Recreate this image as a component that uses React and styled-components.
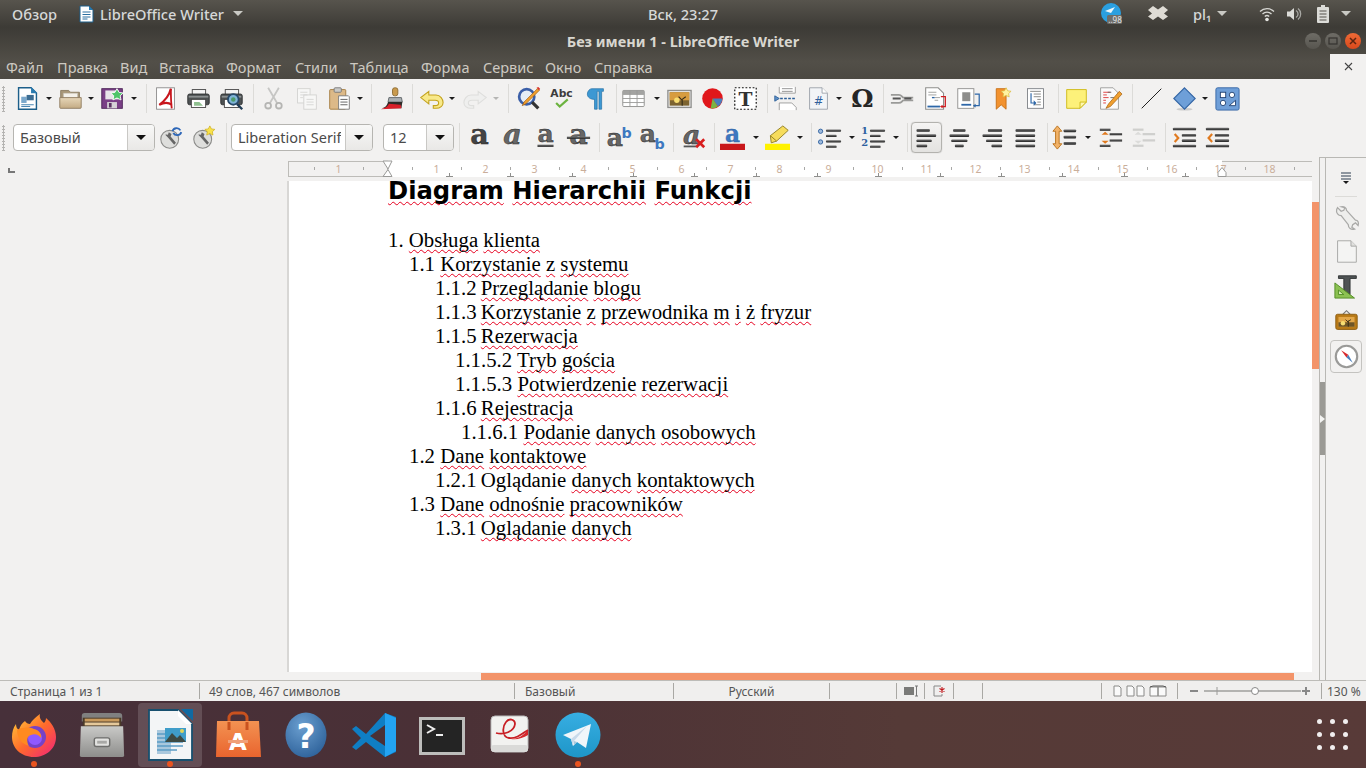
import React from "react";
import styled, { createGlobalStyle } from "styled-components";

const Global = createGlobalStyle`
  html, body { margin: 0; padding: 0; background: #3d3b36; }
  * { box-sizing: border-box; }
  svg { overflow: visible; flex: none; }
`;

const UI = `"Noto Sans", "Open Sans", sans-serif`;

const Screen = styled.div`
  width: 1366px;
  height: 768px;
  display: flex;
  flex-direction: column;
  overflow: hidden;
  font-family: ${UI};
`;

/* ---------- top of the window ---------- */
const Chrome = styled.div`
  background: linear-gradient(#57544d 0, #3d3b36 27px, #3e3c37 30px, #524f48 62px, #4b4842 79px);
  height: 79px;
  flex: none;
`;
const TopBar = styled.div`
  height: 27px;
  display: grid;
  grid-template-columns: 1fr auto 1fr;
  align-items: center;
  color: #d6d8d8;
  font-size: 14.6px;
  font-weight: 500;
`;
const TopLeft = styled.div`
  display: flex;
  align-items: center;
  padding-left: 12px;
`;
const AppName = styled.div`
  display: flex;
  align-items: center;
  gap: 6px;
  margin-left: 21px;
`;
const Tray = styled.div`
  display: flex;
  align-items: center;
  justify-content: flex-end;
  height: 27px;
  padding-right: 8px;
`;
const TraySlot = styled.div`
  width: ${(p) => p.$w}px;
  display: flex;
  align-items: center;
  justify-content: ${(p) => (p.$pad ? "flex-start" : "center")};
  padding-left: ${(p) => p.$pad || 0}px;
  gap: 6px;
`;
const Caret = styled.span`
  display: inline-block;
  width: 0;
  height: 0;
  margin-left: ${(p) => p.$gap || 0}px;
  border-left: 5px solid transparent;
  border-right: 5px solid transparent;
  border-top: 5px solid #c9c9c4;
`;
const TitleBar = styled.div`
  height: 27px;
  display: flex;
  align-items: center;
  justify-content: center;
  position: relative;
  color: #d9d7d0;
  font-size: 14.5px;
  font-weight: 700;
`;
const WinButtons = styled.div`
  position: absolute;
  right: 5px;
  top: 6px;
  display: flex;
  gap: 4px;
`;
const WinButton = styled.div`
  width: 16px;
  height: 16px;
  border-radius: 50%;
  display: flex;
  align-items: center;
  justify-content: center;
  background: ${(p) => (p.$close ? "linear-gradient(#ee6a36,#d8491c)" : "linear-gradient(#6e6c66,#57554f)")};
  color: ${(p) => (p.$close ? "#5b2410" : "#35332f")};
`;
const MenuBar = styled.div`
  height: 25px;
  display: flex;
  align-items: center;
  position: relative;
`;
const MenuItem = styled.div`
  color: #cdc9c1;
  font-size: 14.5px;
  width: ${(p) => p.$w}px;
  padding-left: 6px;
  white-space: nowrap;
`;
const CloseTab = styled.div`
  position: absolute;
  right: 0;
  top: 0;
  width: 36px;
  height: 25px;
  background: #f2f1f0;
  display: flex;
  align-items: center;
  justify-content: center;
`;

/* ---------- toolbars ---------- */
const Toolbar = styled.div`
  height: 39px;
  flex: none;
  background: #f2f1f0;
  display: flex;
  align-items: center;
`;
const Grip = styled.div`
  width: ${(p) => p.$w}px;
  height: 26px;
  flex: none;
  background-image: radial-gradient(#b4b3b1 1.1px, transparent 1.2px);
  background-size: 3px 3px;
  background-repeat: repeat-y;
  background-position: 2px 0;
`;
const Tool = styled.div`
  width: ${(p) => p.$w || 33}px;
  height: 31px;
  flex: none;
  display: flex;
  align-items: center;
  justify-content: center;
  border-radius: 4px;
  ${(p) =>
    p.$active &&
    `
    border: 1px solid #b3b2ae;
    background: linear-gradient(#f5f4f3, #e3e2e0);
    box-shadow: 0 0 1px #aaa;
  `}
`;
const Drop = styled.div`
  width: 9.5px;
  flex: none;
  display: flex;
  justify-content: center;
  &::after {
    content: "";
    border-left: 3.5px solid transparent;
    border-right: 3.5px solid transparent;
    border-top: 3.5px solid ${(p) => (p.$off ? "#b5b5b3" : "#1c1c1c")};
  }
`;
const Gap = styled.div`
  width: ${(p) => p.$w}px;
  flex: none;
`;
const Sep = styled.div`
  width: ${(p) => p.$w}px;
  height: 29px;
  flex: none;
  position: relative;
  &::after {
    content: "";
    position: absolute;
    left: ${(p) => p.$at}px;
    top: 0;
    bottom: 0;
    width: 1px;
    background: #dcdbd8;
  }
`;
const Combo = styled.div`
  width: ${(p) => p.$w}px;
  height: 27px;
  flex: none;
  display: flex;
  background: #fff;
  border: 1px solid #b6b5b1;
  border-radius: 4px;
  color: #4a4a4a;
  font-size: 14.5px;
  overflow: hidden;
`;
const ComboText = styled.div`
  flex: 1;
  min-width: 0;
  padding-left: 6px;
  margin-right: 4px;
  line-height: 25px;
  white-space: nowrap;
  overflow: hidden;
`;
const ComboArrow = styled.div`
  width: 27px;
  flex: none;
  border-left: 1px solid #c9c8c5;
  background: linear-gradient(#f8f8f7, #e9e8e6);
  display: flex;
  align-items: center;
  justify-content: center;
  &::after {
    content: "";
    border-left: 5px solid transparent;
    border-right: 5px solid transparent;
    border-top: 5px solid #111;
  }
`;

/* ---------- work area ---------- */
const Work = styled.div`
  flex: 1;
  min-height: 0;
  display: flex;
  background: #f2f1f0;
`;
const EditorCol = styled.div`
  width: 1319px;
  flex: none;
  display: flex;
  flex-direction: column;
`;
const RulerRow = styled.div`
  height: 24px;
  flex: none;
  display: flex;
  align-items: flex-start;
`;
const RulerCorner = styled.div`
  width: 288px;
  flex: none;
  padding: 11px 0 0 8px;
`;
const CornerMark = styled.div`
  width: 7px;
  height: 5px;
  border-left: 2px solid #777;
  border-bottom: 2px solid #777;
`;
const DocRow = styled.div`
  flex: 1;
  min-height: 0;
  display: flex;
`;
const Gutter = styled.div`
  width: 287px;
  flex: none;
`;
const Page = styled.div`
  width: 1025px;
  flex: none;
  background: #fff;
  border-left: 2px solid #d8d7d5;
  padding: 0 0 0 99px;
  color: #000;
  font-family: "Liberation Serif", serif;
  font-size: 20.8px;
  line-height: 24px;
`;
const VScroll = styled.div`
  flex: 1;
  padding-top: 21px;
`;
const VThumb = styled.div`
  height: 167px;
  background: #f3946a;
`;
const HScroll = styled.div`
  height: 8px;
  flex: none;
  padding: 1px 25px 0 481px;
`;
const HThumb = styled.div`
  height: 7px;
  background: #f3946a;
`;
const Heading = styled.div`
  font-family: "DejaVu Sans", sans-serif;
  font-weight: 700;
  font-size: 24.27px;
  line-height: 28px;
  margin: -4px 0 23px;
  white-space: nowrap;
`;
const Line = styled.div`
  padding-left: ${(p) => p.$indent}px;
  white-space: nowrap;
`;
const Num = styled.span`
  margin-right: ${(p) => (p.$tight ? -1 : 0)}px;
`;
const Wavy = styled.span`
  text-decoration: underline wavy #e6001e 1.2px;
  text-underline-offset: 2px;
  text-decoration-skip-ink: none;
`;

/* ---------- sidebar ---------- */
const Handle = styled.div`
  width: 7px;
  flex: none;
  border-left: 1px solid #b9b8b4;
  border-right: 1px solid #b9b8b4;
  border-top: 1px solid #b9b8b4;
  padding-top: 224px;
`;
const HandleGrip = styled.div`
  height: 73px;
  background: #9b9a95;
  display: flex;
  align-items: center;
  justify-content: center;
  &::after {
    content: "";
    border-top: 4px solid transparent;
    border-bottom: 4px solid transparent;
    border-left: 5px solid #f4f4f2;
  }
`;
const TabBar = styled.div`
  flex: 1;
  border-top: 1px solid #b9b8b4;
  display: flex;
  flex-direction: column;
  align-items: center;
  padding-top: 13px;
`;
const TabDivider = styled.div`
  width: 22px;
  height: 1px;
  background: #dcdbd8;
  margin: 11px 0 3px;
`;
const Tab = styled.div`
  width: 32px;
  height: ${(p) => (p.$active ? 33 : 34.5)}px;
  flex: none;
  margin-top: ${(p) => (p.$active ? 2 : 0)}px;
  display: flex;
  align-items: center;
  justify-content: center;
  border-radius: 4px;
  border: 1px solid ${(p) => (p.$active ? "#c4c3c0" : "transparent")};
`;

/* ---------- status bar ---------- */
const Status = styled.div`
  height: 21px;
  flex: none;
  display: flex;
  background: #f0efee;
  border-top: 1px solid #bdbcb8;
  color: #555;
  font-size: 12px;
  align-items: center;
`;
const Cell = styled.div`
  width: ${(p) => p.$w}px;
  height: 16px;
  flex: none;
  display: flex;
  align-items: center;
  justify-content: ${(p) => (p.$center ? "center" : "flex-start")};
  padding-left: ${(p) => (p.$center ? 0 : p.$pad ?? 9)}px;
  border-right: ${(p) => (p.$last ? "none" : "1px solid #a9a8a4")};
  white-space: nowrap;
`;

/* ---------- dock ---------- */
const Dock = styled.div`
  height: 67px;
  flex: none;
  display: flex;
  align-items: center;
  background: linear-gradient(90deg, #47303a 0, #4a3036 420px, #553a37 900px, #583a38 1366px);
  position: relative;
`;
const DockSlot = styled.div`
  width: 64px;
  height: 64px;
  flex: none;
  margin: 1px 2px 0;
  display: flex;
  align-items: center;
  justify-content: center;
  position: relative;
  border-radius: 4px;
  background: ${(p) => (p.$active ? "rgba(255,255,255,.15)" : "transparent")};
  ${(p) =>
    p.$running &&
    `
    &::after {
      content: "";
      position: absolute;
      left: 29px;
      bottom: 0;
      width: 6px;
      height: 6px;
      border-radius: 50%;
      background: #e95420;
    }
  `}
`;
const AppGrid = styled.div`
  position: absolute;
  right: 18px;
  top: 18px;
  display: grid;
  grid-template-columns: repeat(3, 5px);
  gap: 8px;
`;
const AppDot = styled.div`
  width: 5px;
  height: 5px;
  border-radius: 50%;
  background: #f1eeee;
`;

/* ---------- small drawing helpers ---------- */
const Icon = ({ size = 25, children, vb = "0 0 28 28" }) => (
  <svg width={size} height={size} viewBox={vb}>
    {children}
  </svg>
);

const Defs = () => (
  <svg width="0" height="0" style={{ position: "absolute" }}>
    <defs>
      <linearGradient id="bar" x1="0" y1="0" x2="0" y2="1">
        <stop offset="0" stopColor="#777" />
        <stop offset="1" stopColor="#222" />
      </linearGradient>
      <linearGradient id="tan" x1="0" y1="0" x2="0" y2="1">
        <stop offset="0" stopColor="#e6d6b8" />
        <stop offset="1" stopColor="#c4ab84" />
      </linearGradient>
      <linearGradient id="ffx" x1="0" y1="0" x2="1" y2="1">
        <stop offset="0" stopColor="#ffd23a" />
        <stop offset=".5" stopColor="#ff6b2b" />
        <stop offset="1" stopColor="#f0217c" />
      </linearGradient>
      <linearGradient id="store" x1="0" y1="0" x2="0" y2="1">
        <stop offset="0" stopColor="#f39252" />
        <stop offset="1" stopColor="#e9642e" />
      </linearGradient>
      <radialGradient id="help" cx=".4" cy=".3" r=".8">
        <stop offset="0" stopColor="#6b9fd0" />
        <stop offset="1" stopColor="#2a5e97" />
      </radialGradient>
      <linearGradient id="tg" x1="0" y1="0" x2="0" y2="1">
        <stop offset="0" stopColor="#37aee2" />
        <stop offset="1" stopColor="#1e96c8" />
      </linearGradient>
      <linearGradient id="cab" x1="0" y1="0" x2="0" y2="1">
        <stop offset="0" stopColor="#c9c9c7" />
        <stop offset="1" stopColor="#8d8d8b" />
      </linearGradient>
    </defs>
  </svg>
);

const Bars = ({ rows }) => (
  <Icon>
    {rows.map(([dx, w], i) => (
      <rect key={i} x={2.8 + dx} y={4.5 + i * 5.8} width={w} height="3" rx="1" fill="url(#bar)" />
    ))}
  </Icon>
);

const Glyph = ({ children, style = "normal", color = "#555", size = 32, x = 14, y = 21 }) => (
  <text x={x} y={y} textAnchor="middle" fontFamily="DejaVu Serif" fontWeight="700" fontStyle={style} fontSize={size} fill={color} stroke="#222" strokeWidth="0.5">
    {children}
  </text>
);

/* ---------- toolbar icons ---------- */
const NewDoc = () => (
  <Icon>
    <path d="M4 2h14l6 6v18H4z" fill="#fff" stroke="#1d5f8a" strokeWidth="1.6" />
    <path d="M18 1l7 7h-7z" fill="#2a7bb0" />
    <rect x="7" y="12" width="6" height="7" fill="#7aa8cc" />
    <rect x="13" y="10" width="8" height="6" fill="#3c6d92" />
    <path d="M7 21h14M7 23h10" stroke="#4a86b3" strokeWidth="1.2" />
  </Icon>
);
const OpenFolder = () => (
  <Icon>
    <path d="M3 5h9l2 2h10v6H3z" fill="#a89779" stroke="#8a7a5f" />
    <rect x="6" y="8" width="16" height="7" fill="#f4f1ea" stroke="#bdb7a8" strokeWidth=".6" />
    <path d="M2 13h24v11a1 1 0 0 1-1 1H3a1 1 0 0 1-1-1z" fill="url(#tan)" stroke="#8d7b5e" />
  </Icon>
);
const SaveDoc = () => (
  <Icon>
    <rect x="2" y="3" width="23" height="22" fill="#7a3f86" stroke="#4c2256" />
    <rect x="6" y="5" width="15" height="10" fill="#e9e4ea" />
    <rect x="8" y="18" width="11" height="7" fill="#d6d2d6" />
    <rect x="10" y="19" width="3" height="5" fill="#5a3362" />
    <path d="M19 3l2.400 4.200 4.600.6-3.400 3.200.9 4.600-4.500-2.200-4.500 2.200.9-4.600-3.400-3.200 4.600-.6z" fill="#4fc46a" stroke="#fff" strokeWidth="1" />
  </Icon>
);
const PdfIcon = () => (
  <Icon>
    <rect x="4" y="2" width="20" height="24" fill="#fff" stroke="#8a8a8a" />
    <path d="M20 3c-2 8-6 13-13 18 6-3 10-3 14 0" fill="none" stroke="#c8161d" strokeWidth="2.400" />
    <path d="M20 3c0 7 0 14 1 22" fill="none" stroke="#c8161d" strokeWidth="2" />
  </Icon>
);
const PrintIcon = ({ lens }) => (
  <Icon>
    <rect x="7" y="4" width="15" height="8" fill="#f4f4f4" stroke="#444" />
    <rect x="2" y="9" width="24" height="12" rx="2" fill="#4e5253" stroke="#2a2c2d" />
    <rect x="3" y="11" width="22" height="2" fill="#8b8f90" />
    <rect x="6" y="15" width="16" height="9" fill="#fff" stroke="#444" />
    {lens ? (
      <>
        <circle cx="16" cy="15" r="6" fill="#7fb4d8" stroke="#27496a" strokeWidth="2" />
        <circle cx="16" cy="15" r="2.500" fill="#4d9a6a" />
        <path d="M20 20l6 6" stroke="#1f3b55" strokeWidth="2.600" />
      </>
    ) : (
      <path d="M9 18h6l4 4H9z" fill="#8fc08f" />
    )}
  </Icon>
);
const CutIcon = () => (
  <Icon>
    <path d="M8 2l10 17M20 2L10 19" stroke="#c6c6c4" strokeWidth="2" fill="none" />
    <circle cx="8" cy="22" r="3.200" fill="none" stroke="#b5b5b3" strokeWidth="2" />
    <circle cx="20" cy="22" r="3.200" fill="none" stroke="#b5b5b3" strokeWidth="2" />
  </Icon>
);
const CopyIcon = () => (
  <Icon>
    <rect x="4" y="3" width="14" height="16" fill="#f7f7f6" stroke="#d2d2d0" />
    <rect x="11" y="10" width="14" height="16" fill="#f7f7f6" stroke="#d2d2d0" />
    <path d="M7 7h8M7 10h8M7 13h3M14 15h8M14 18h8M14 21h8" stroke="#d5d5d3" />
  </Icon>
);
const PasteIcon = () => (
  <Icon>
    <rect x="3" y="4" width="18" height="22" rx="1" fill="#dcb988" stroke="#a27a3e" />
    <rect x="8" y="2" width="8" height="5" rx="1" fill="#c9c9c7" stroke="#777" />
    <path d="M13 11h11l1 1v14H13z" fill="#fff" stroke="#777" />
    <path d="M15 15h8M15 18h8M15 21h8" stroke="#555" />
  </Icon>
);
const BrushIcon = () => (
  <Icon>
    <rect x="14" y="2" width="6" height="9" rx="2.500" fill="#c99a4d" stroke="#8b6a30" />
    <path d="M10 13h14l1 5H9z" fill="#aab0b3" stroke="#5d6366" />
    <path d="M9 18h16l-1 7H2c4-1 6-3 7-7z" fill="#2d2b28" />
    <path d="M1 26c5-1 8-3 9-6l13 1 1 4z" fill="#d9202a" />
  </Icon>
);
const UndoIcon = ({ off, flip }) => (
  <Icon>
    <g transform={flip ? "translate(28 0) scale(-1 1)" : undefined}>
      <path
        d="M11 6L2 13l9 7v-4h7c3 0 4 1.500 4 3s-1 3-4 3h-2v3h3c5 0 8-3 8-6.500S24 10 19 10h-8z"
        fill={off ? "#efefee" : "#f8e98a"}
        stroke={off ? "#dededc" : "#c3a21c"}
        strokeWidth="1.200"
      />
    </g>
  </Icon>
);
const FindIcon = () => (
  <Icon>
    <circle cx="12" cy="12" r="8.500" fill="#e6eef6" stroke="#3b5fa8" strokeWidth="3" />
    <path d="M18 18l7 7" stroke="#333" strokeWidth="3.500" />
    <path d="M24 3L9 18l-2 4 4-2L26 5z" fill="#f0a030" stroke="#a25e10" strokeWidth=".8" />
    <path d="M23 2l3 3 1-2-2-2z" fill="#d9342a" />
  </Icon>
);
const SpellIcon = () => (
  <Icon>
    <text x="14" y="12" textAnchor="middle" fontFamily="DejaVu Sans" fontWeight="700" fontSize="12" fill="#3c3c3c">
      Abc
    </text>
    <path d="M8 19l4 4 9-8" fill="none" stroke="#6cb33f" strokeWidth="2.400" />
  </Icon>
);
const Pilcrow = () => (
  <Icon>
    <path d="M11 3h13v3h-2v20h-3V6h-2v20h-3V15c-5 0-8-2.500-8-6s3-6 5-6z" fill="#3d98d3" stroke="#1c6aa0" strokeWidth=".7" />
  </Icon>
);
const TableIcon = () => (
  <Icon>
    <rect x="2" y="5" width="24" height="18" rx="1" fill="#fff" stroke="#8a8a88" />
    <rect x="2" y="5" width="24" height="5" fill="#a3a3a1" />
    <path d="M2 14h24M2 18.500h24M10 5v18M18 5v18" stroke="#9a9a98" />
  </Icon>
);
const PictureIcon = ({ frame = "#8f8f8d" }) => (
  <Icon>
    <rect x="1" y="5" width="26" height="19" fill="#eee" stroke={frame} strokeWidth="1.500" />
    <rect x="3" y="7" width="22" height="15" fill="#7c6330" />
    <rect x="3" y="7" width="22" height="9" fill="#d79c3f" />
    <circle cx="11" cy="16" r="3" fill="#f7dd72" />
    <path d="M17 22v-7M17 16l-4-4M17 15l4-3" stroke="#332a18" strokeWidth="1.200" />
  </Icon>
);
const ChartIcon = () => (
  <Icon>
    <circle cx="14" cy="14" r="11.500" fill="#e0171b" />
    <path d="M14 14l11 0a11 11 0 0 1-5 9z" fill="#4a7ebb" />
    <path d="M14 14l6 9a11 11 0 0 1-8 2z" fill="#7cb342" />
  </Icon>
);
const TextBox = () => (
  <Icon>
    <rect x="2" y="2" width="24" height="24" fill="#fff" stroke="#111" strokeWidth="1.300" strokeDasharray="2 2" />
    <text x="14" y="22" textAnchor="middle" fontFamily="DejaVu Serif" fontWeight="700" fontSize="21" fill="#333">
      T
    </text>
  </Icon>
);
const BreakIcon = () => (
  <Icon>
    <path d="M7 1v7h18V1" fill="#fff" stroke="#999" />
    <path d="M10 3h12M10 6h12M10 21h9M10 23h9" stroke="#888" />
    <path d="M2 11v6l5-3z" fill="#5f8fc6" stroke="#2c5f98" />
    <path d="M8 14h18" stroke="#2c5f98" strokeWidth="1.500" strokeDasharray="3 1.500" />
    <path d="M7 27v-8h14l5 5v3" fill="#fff" stroke="#999" />
  </Icon>
);
const FieldIcon = () => (
  <Icon>
    <path d="M4 2h14l6 6v18H4z" fill="#f2f4f7" stroke="#9aa0a8" />
    <path d="M18 2v6h6" fill="#fff" stroke="#9aa0a8" />
    <text x="14" y="21" textAnchor="middle" fontFamily="DejaVu Sans" fontSize="13" fill="#2f5f9c">
      #
    </text>
  </Icon>
);
const OmegaIcon = () => (
  <Icon>
    <text x="14" y="24" textAnchor="middle" fontFamily="DejaVu Serif" fontWeight="700" fontSize="28" fill="#262626">
      Ω
    </text>
  </Icon>
);
const LinkIcon = () => (
  <Icon>
    <path d="M1 10h9c3 0 3 2 5 3h11M1 19h9c3 0 3-2 5-3h11" fill="none" stroke="#9a9a98" strokeWidth="2" />
    <path d="M3 14h9M16 14h8" stroke="#555" strokeWidth="2" />
  </Icon>
);
const NoteDoc = () => (
  <Icon>
    <path d="M3 2h14l6 6v18H3z" fill="#fff" stroke="#8e8e8c" strokeWidth="1.200" />
    <path d="M6 7h9M6 10h9M13 13h6M13 16h4" stroke="#9a9a98" />
    <path d="M10 13h3" stroke="#2e67a8" strokeWidth="1.500" />
    <rect x="5" y="22" width="14" height="2" fill="#2e67a8" />
    <path d="M20 12h5v11h-5" fill="none" stroke="#cf1d20" strokeWidth="1.400" />
    <path d="M19 23l3-2v4z" fill="#cf1d20" />
  </Icon>
);
const EndnoteIcon = () => (
  <Icon>
    <rect x="2" y="3" width="18" height="22" fill="#fff" stroke="#8e8e8c" />
    <rect x="7" y="7" width="9" height="10" fill="#8e8e8c" />
    <rect x="6" y="20" width="11" height="2" fill="#2e67a8" />
    <path d="M21 9h5v13h-6" fill="none" stroke="#2e67a8" strokeWidth="1.400" />
    <path d="M19 22l3-2v4z" fill="#2e67a8" />
  </Icon>
);
const BookmarkIcon = () => (
  <Icon>
    <path d="M7 3h11v23l-5.500-5L7 26z" fill="#f2922f" stroke="#c76d12" />
    <path d="M18 2l1.800 3.400 3.800.5-2.800 2.600.7 3.800-3.500-1.800-3.500 1.800.7-3.800-2.800-2.600 3.800-.5z" fill="#fff3a0" stroke="#d9b93a" strokeWidth=".8" />
  </Icon>
);
const CrossRef = () => (
  <Icon>
    <rect x="5" y="3" width="18" height="22" fill="#fff" stroke="#7c7f84" />
    <path d="M8 6h12M12 9h8M12 12h8M16 15h4M16 18h4M12 21h8" stroke="#7d7d7b" />
    <path d="M9 8v11h5" fill="none" stroke="#2e67a8" strokeWidth="1.300" />
    <path d="M12 16l3 3-3 3z" fill="#2e67a8" />
  </Icon>
);
const StickyIcon = () => (
  <Icon>
    <path d="M3 4h22v14l-7 7H3z" fill="#fdf17a" stroke="#cdb812" />
    <path d="M18 25v-7h7z" fill="#fff8b0" stroke="#cdb812" />
  </Icon>
);
const TrackIcon = () => (
  <Icon>
    <path d="M4 2h14l6 6v18H4z" fill="#fafafa" stroke="#9a9a98" />
    <path d="M7 7h8M7 10h4M7 13h6M7 16h3M7 19h3" stroke="#d33" />
    <path d="M12 7h4M15 13h4" stroke="#666" />
    <path d="M25 6L13 20l-3 5 5-2L28 9z" fill="#f0a030" stroke="#a25e10" strokeWidth=".8" />
  </Icon>
);
const LineIcon = () => (
  <Icon>
    <path d="M3 25L25 3" stroke="#1c1c1c" strokeWidth="1.100" />
  </Icon>
);
const DiamondIcon = () => (
  <Icon>
    <ellipse cx="14" cy="26" rx="9" ry="1.500" fill="#ccc" />
    <path d="M14 2l12 12-12 12L2 14z" fill="#6e9fd8" stroke="#3465a4" strokeWidth="1.200" />
  </Icon>
);
const ShapesIcon = () => (
  <Icon>
    <rect x="1" y="2" width="26" height="25" rx="2" fill="#6f9fd8" stroke="#3465a4" />
    <rect x="6" y="7" width="6" height="6" fill="#fff" stroke="#1d3f70" />
    <circle cx="19" cy="10" r="3" fill="#fff" stroke="#1d3f70" />
    <circle cx="9" cy="19" r="3" fill="#fff" stroke="#1d3f70" />
    <path d="M16 22l7-6v6z" fill="#fff" stroke="#1d3f70" />
  </Icon>
);
const StyleGear = ({ badge }) => (
  <Icon>
    <circle cx="12" cy="16" r="10" fill="#dededc" stroke="#8b8b89" strokeWidth="1.200" />
    <path d="M7 11l3 3 1 1 6 7 2-2-6-7 1-3-3-2-1 3-2-.5z" fill="#666" />
    {badge === "new" ? (
      <path d="M20 1l1.800 3.400 3.800.5-2.800 2.600.7 3.800-3.500-1.800-3.500 1.800.7-3.800-2.800-2.600 3.800-.5z" fill="#f9e24a" stroke="#cdae1c" strokeWidth=".8" />
    ) : (
      <path d="M15 7a5 5 0 0 1 9-1M25 8a5 5 0 0 1-9 1" fill="none" stroke="#2e67b8" strokeWidth="2" />
    )}
  </Icon>
);
const BoldA = () => (
  <Icon>
    <Glyph color="#444">a</Glyph>
  </Icon>
);
const ItalicA = () => (
  <Icon>
    <Glyph style="italic" color="#666">a</Glyph>
  </Icon>
);
const UnderA = () => (
  <Icon>
    <Glyph y={19} size={28} color="#666">a</Glyph>
    <rect x="5" y="22" width="18" height="2.500" fill="url(#bar)" />
  </Icon>
);
const StrikeA = () => (
  <Icon>
    <Glyph color="#666">a</Glyph>
    <rect x="1" y="13" width="26" height="2.500" fill="url(#bar)" />
  </Icon>
);
const SuperA = () => (
  <Icon>
    <Glyph x={10} y={23} size={28} color="#666">a</Glyph>
    <text x="23" y="14" textAnchor="middle" fontFamily="DejaVu Sans" fontWeight="700" fontSize="16" fill="#3d78c0">b</text>
  </Icon>
);
const SubA = () => (
  <Icon>
    <Glyph x={10} y={19} size={28} color="#666">a</Glyph>
    <text x="23" y="27" textAnchor="middle" fontFamily="DejaVu Sans" fontWeight="700" fontSize="16" fill="#3d78c0">b</text>
  </Icon>
);
const ClearA = () => (
  <Icon>
    <Glyph style="italic" color="#666" x={12} size={30}>a</Glyph>
    <rect x="3" y="23" width="14" height="2" fill="#555" />
    <path d="M17 16l9 9M26 16l-9 9" stroke="#d81e1e" strokeWidth="3" />
  </Icon>
);
const FontColor = () => (
  <Icon>
    <text x="14" y="19" textAnchor="middle" fontFamily="DejaVu Serif" fontWeight="700" fontSize="26" fill="#3d78c0" stroke="#2a5a9c" strokeWidth=".4">a</text>
    <rect x="0" y="21" width="28" height="7" fill="#c9181c" />
  </Icon>
);
const HighlightIcon = () => (
  <Icon>
    <path d="M6 12L20 1l6 5-13 12-6 2z" fill="#f6dc5c" stroke="#8e7a1c" />
    <path d="M6 12l7 6" stroke="#8e7a1c" />
    <rect x="0" y="21" width="28" height="7" fill="#fff200" />
  </Icon>
);
const ListRows = ({ nums }) => (
  <Icon>
    {nums ? (
      <>
        <text x="4" y="10" textAnchor="middle" fontFamily="DejaVu Serif" fontWeight="700" fontSize="11" fill="#2d5f9e">1</text>
        <text x="4" y="24" textAnchor="middle" fontFamily="DejaVu Serif" fontWeight="700" fontSize="11" fill="#2d5f9e">2</text>
      </>
    ) : (
      <>
        <circle cx="4" cy="7" r="2.400" fill="#9db9db" stroke="#2d5f9e" />
        <circle cx="4" cy="19" r="2.400" fill="#9db9db" stroke="#2d5f9e" />
      </>
    )}
    <rect x="10" y="5" width="17" height="2.500" rx="1" fill="url(#bar)" />
    <rect x="10" y="11" width="12" height="2.500" rx="1" fill="url(#bar)" />
    <rect x="10" y="17" width="17" height="2.500" rx="1" fill="url(#bar)" />
    <rect x="10" y="23" width="12" height="2.500" rx="1" fill="url(#bar)" />
  </Icon>
);
const SpacingIcon = () => (
  <Icon>
    <path d="M6 1l5 6H8v14h3l-5 6-5-6h3V7H1z" fill="#f2b267" stroke="#b76e17" />
    <rect x="13" y="5" width="14" height="3" rx="1" fill="url(#bar)" />
    <rect x="13" y="12" width="14" height="3" rx="1" fill="url(#bar)" />
    <rect x="13" y="19" width="14" height="3" rx="1" fill="url(#bar)" />
  </Icon>
);
const ParaSpace = ({ off }) => {
  const fill = off ? "#cfcfcd" : "url(#bar)";
  return (
    <Icon>
      <rect x="2" y="4" width="12" height="2.500" fill={fill} />
      <rect x="2" y="22" width="12" height="2.500" fill={fill} />
      <rect x="13" y="9" width="14" height="2.500" fill={fill} />
      <rect x="13" y="16" width="14" height="2.500" fill={fill} />
      <path d="M8 7.500l4 3.500H4zM8 21l4-3.500H4z" fill={off ? "#dcdcda" : "#e07a1f"} />
    </Icon>
  );
};
const IndentIcon = ({ out }) => (
  <Icon>
    <rect x="1" y="3" width="26" height="3" rx="1" fill="url(#bar)" />
    <rect x="11" y="10" width="16" height="3" rx="1" fill="url(#bar)" />
    <rect x="11" y="16" width="16" height="3" rx="1" fill="url(#bar)" />
    <rect x="1" y="22" width="26" height="3" rx="1" fill="url(#bar)" />
    <path d={out ? "M8 10l-4 4.500 4 4.500" : "M3 10l4 4.500-4 4.500"} fill="none" stroke="#e07a1f" strokeWidth="2.400" />
  </Icon>
);

/* ---------- sidebar icons ---------- */
const MenuGlyph = () => (
  <Icon size={14} vb="0 0 14 14">
    <path d="M2 2h10M2 5h10M2 8h10" stroke="#2c3e50" strokeWidth="1.200" />
    <path d="M7 13l-3-3h6z" fill="#1a1a1a" />
  </Icon>
);
const WrenchIcon = () => (
  <Icon>
    <path d="M4 3l4 4 3-1 1-3-4-1c3-1 6 1 6 4l10 11c3 0 4 3 3 6l-3-3-3 2-1 3 3 2c-4 1-7-1-7-5L8 12c-3 0-6-3-5-7z" fill="#eeeeec" stroke="#a9a9a7" strokeWidth="1.400" />
  </Icon>
);
const BlankPage = () => (
  <Icon>
    <path d="M4 2h15l6 6v18H4z" fill="#f4f4f3" stroke="#a3a3a1" />
    <path d="M19 2v6h6" fill="#e0e0de" stroke="#a3a3a1" />
  </Icon>
);
const StylesTab = () => (
  <Icon>
    <path d="M5 2h20v3H18v18h-7V5H5z" fill="#4f5354" stroke="#2e3132" />
    <path d="M1 27V10l22 17z" fill="#8cc152" stroke="#4e8a1f" />
    <path d="M5 23v-5l6 5z" fill="#d6eeb8" stroke="#4e8a1f" />
  </Icon>
);
const GalleryTab = () => (
  <Icon>
    <path d="M10 7l4-4 4 4" fill="none" stroke="#777" strokeWidth="1.200" />
    <rect x="2" y="7" width="24" height="17" rx="2" fill="#b87a17" stroke="#8a5a0f" />
    <rect x="5" y="10" width="18" height="11" fill="#e3a84a" />
    <rect x="5" y="16" width="18" height="5" fill="#6d5527" />
    <circle cx="10" cy="17" r="2.500" fill="#f7dd72" />
    <path d="M16 21v-7M16 16l-3-3M16 15l3-2" stroke="#332a18" />
  </Icon>
);
const CompassIcon = () => (
  <Icon>
    <circle cx="14" cy="14" r="12" fill="#fff" stroke="#9a9a98" strokeWidth="2.400" />
    <path d="M8 7l8 5-2 3z" fill="#d8282c" />
    <path d="M21 21l-7-6 2-3z" fill="#4a7ebb" />
  </Icon>
);

/* ---------- tray and window icons ---------- */
const WriterSmall = () => (
  <Icon size={16} vb="0 0 16 16">
    <path d="M2 0h9l4 4v12H2z" fill="#fff" stroke="#1d5f8a" />
    <path d="M11 0l4 4h-4z" fill="#2a7bb0" />
    <path d="M4.500 6h8M4.500 8.500h8M4.500 11h8M4.500 13h5" stroke="#2a6ea0" />
  </Icon>
);
const TelegramTray = () => (
  <svg width="24" height="24" viewBox="0 0 24 24">
    <circle cx="11" cy="11" r="10" fill="#2a9fe0" />
    <path d="M5 9l10-4-4 6z" fill="#fff" opacity=".9" />
    <rect x="7" y="13" width="15" height="9" rx="1.500" fill="#6d6d6a" />
    <text x="15" y="20.500" textAnchor="middle" fontFamily="Noto Sans" fontSize="8" fill="#dcdcdc">..98</text>
  </svg>
);
const DropTray = () => (
  <svg width="20" height="18" viewBox="0 0 20 18">
    <path d="M5 1l5 3.500L15 1l5 4-4 3.500 4 3-5 3.500-5-3.500L5 15 0 11.500l4-3-4-3.500z" fill="#dfdcd5" />
  </svg>
);
const WifiTray = () => (
  <svg width="16" height="16" viewBox="0 0 16 16">
    <path d="M1 5.500a10 10 0 0 1 14 0M3.500 8a6.500 6.500 0 0 1 9 0M5.800 10.500a3.200 3.200 0 0 1 4.400 0" fill="none" stroke="#d8d8d4" strokeWidth="1.300" />
    <circle cx="8" cy="13.500" r="1.800" fill="#e6e6e2" />
  </svg>
);
const VolumeTray = () => (
  <svg width="16" height="16" viewBox="0 0 16 16">
    <path d="M1 5.500h3L8 2v12l-4-3.500H1z" fill="#dcdcd8" />
    <path d="M10 4.500a4 4 0 0 1 0 7M12 2.500a7 7 0 0 1 0 11" fill="none" stroke="#a8a8a4" strokeWidth="1.300" />
  </svg>
);
const BatteryTray = () => (
  <svg width="12" height="18" viewBox="0 0 12 18">
    <path d="M4 0h4v2h3a1 1 0 0 1 1 1v14a1 1 0 0 1-1 1H1a1 1 0 0 1-1-1V3a1 1 0 0 1 1-1h3z" fill="#dcdcd8" />
    <path d="M2.500 6h7M2.500 9h7M2.500 12h7M2.500 15h7" stroke="#56534c" />
  </svg>
);

/* ---------- dock icons ---------- */
const Firefox = () => (
  <Icon size={50} vb="0 0 50 50">
    <path d="M25 47C12 47 3 38 3 27c0-5 1-9 4-13 0 3 1 5 3 6 1-4 3-7 6-9 1 2 3 3 5 3 2-4 6-7 10-10-1 4 1 6 4 9 1-1 2-3 2-5 5 4 10 11 10 19 0 12-10 20-22 20z" fill="url(#ffx)" />
    <circle cx="26" cy="27" r="11" fill="#7542c7" />
    <circle cx="26" cy="28" r="7" fill="#9059ff" />
    <path d="M8 20c6-3 12-3 17-1 5 1 8 5 7 9-2-3-6-5-10-3-4 1-5 6-2 11-7-2-12-8-12-16z" fill="#ff8a1f" />
  </Icon>
);
const Cabinet = () => (
  <Icon size={50} vb="0 0 52 52">
    <path d="M5 6a3 3 0 0 1 3-3h36a3 3 0 0 1 3 3v6H5z" fill="#808080" />
    <rect x="6" y="8" width="40" height="12" fill="#4a3a28" />
    <rect x="8" y="9" width="36" height="3" fill="#c99a5c" />
    <rect x="8" y="13" width="36" height="3" fill="#e5c89a" />
    <path d="M4 17h44l1 30a2 2 0 0 1-2 2H5a2 2 0 0 1-2-2z" fill="url(#cab)" />
    <rect x="18" y="29" width="16" height="9" rx="2" fill="#e2e2e0" stroke="#6e6e6c" strokeWidth="1.500" />
    <rect x="21" y="32" width="10" height="3" fill="#a8a8a6" />
  </Icon>
);
const WriterDock = () => (
  <Icon size={54} vb="0 0 54 54">
    <path d="M6 2h29l14 14v36H6z" fill="#f3f5f6" stroke="#17506f" strokeWidth="1.800" />
    <path d="M35 2l14 14h-6l-8-8z" fill="#fff" />
    <path d="M38 1h12v12z" fill="#0f6aa2" />
    <rect x="14" y="22" width="14" height="24" fill="#a9c8dd" />
    <path d="M14 26h14M14 30h14M14 34h26M14 38h26M14 42h20" stroke="#5b9cc5" strokeWidth="1.500" />
    <rect x="22" y="20" width="21" height="14" fill="#3f9dc9" />
    <path d="M22 34l7-9 5 5 3-3 6 7z" fill="#3d4a43" />
    <circle cx="39" cy="23" r="2" fill="#e0d45a" />
  </Icon>
);
const StoreDock = () => (
  <Icon size={50} vb="0 0 50 50">
    <path d="M16 12V8a5 5 0 0 1 5-5h8a5 5 0 0 1 5 5v4" fill="none" stroke="#c9521f" strokeWidth="3" />
    <path d="M4 11h42l2 36H3z" fill="url(#store)" />
    <path d="M16 12v8M34 12v8" stroke="#c9521f" strokeWidth="3" />
    <text x="25" y="40" textAnchor="middle" fontFamily="DejaVu Sans" fontWeight="700" fontSize="23" fill="#fff">A</text>
    <rect x="15" y="30" width="20" height="3" fill="#f0a078" />
  </Icon>
);
const HelpDock = () => (
  <svg width="42" height="46" viewBox="0 0 42 46">
    <ellipse cx="21" cy="23" rx="20.500" ry="22.500" fill="url(#help)" />
    <text x="21" y="36" textAnchor="middle" fontFamily="DejaVu Sans" fontWeight="700" fontSize="33" fill="#fff">?</text>
  </svg>
);
const VSCodeDock = () => (
  <Icon size={46} vb="0 0 46 46">
    <path d="M34 1L15 22 5 14 1 17l9 9-9 9 4 3 10-8 19 15 11-5V5z" fill="#0f7ec4" />
    <path d="M34 1l11 5v33l-11 6z" fill="#23a3f2" />
    <path d="M34 13L19 24l15 10z" fill="#4a3036" />
  </Icon>
);
const TerminalDock = () => (
  <Icon size={48} vb="0 0 48 48">
    <rect x="1" y="6" width="46" height="38" fill="#bdbdbb" />
    <rect x="4" y="9" width="40" height="32" fill="#242424" />
    <path d="M9 14l7 4-7 4" fill="none" stroke="#eee" strokeWidth="2" />
    <path d="M18 24h7" stroke="#eee" strokeWidth="2" />
  </Icon>
);
const EvinceDock = () => (
  <Icon size={48} vb="0 0 48 48">
    <rect x="5" y="5" width="37" height="36" rx="4" fill="#f2f2f0" stroke="#bbb" />
    <rect x="5" y="34" width="37" height="7" rx="3" fill="#dadad8" />
    <path d="M10 22c8 2 18-1 19-9 0-5-6-6-9-2-4 5-4 15 3 16 7 1 13-4 19-8" fill="none" stroke="#c81e24" strokeWidth="1.800" />
    <path d="M25 28c7 0 13-4 17-9v5c-5 3-11 5-17 4z" fill="#d5282c" />
  </Icon>
);
const TelegramDock = () => (
  <Icon size={46} vb="0 0 46 46">
    <circle cx="23" cy="23" r="22.500" fill="url(#tg)" />
    <path d="M8 23l28-11-5 24-9-6-4 4-2-7z" fill="#f0f6fa" />
    <path d="M16 27l2 7 1-5 13-15z" fill="#c8daea" />
    <path d="M19 29l3 1-3 3z" fill="#a9c9dd" />
  </Icon>
);

/* ---------- ruler ---------- */
const RulerSvg = () => {
  const unit = 49;
  const zero = 99.5;
  const nums = [];
  for (let i = -1; i <= 18; i++) if (i !== 0) nums.push(i);
  const halves = [];
  for (let i = -2; i <= 18; i++) halves.push(zero + i * unit + unit / 2);
  const tabs = [];
  for (let i = 1; i <= 13; i++) tabs.push(zero + i * 61.35);
  return (
    <svg width="1031" height="20" viewBox="0 0 1031 20">
      <rect x="0.500" y="4.500" width="99" height="15" fill="#f2f1f0" stroke="#bdbcb8" />
      <rect x="100" y="3" width="834" height="17" fill="#fff" />
      <path d="M934 4.500H1024M934 19.500H1024" stroke="#bdbcb8" />
      {halves.filter((x) => x > 2 && x < 1022).map((x) => (
        <rect key={x} x={Math.round(x)} y="10" width="1" height="3" fill="#a9a9a7" />
      ))}
      {nums.map((n) => (
        <text key={n} x={zero + n * unit} y="15.500" textAnchor="middle" fontFamily="Noto Sans" fontSize="10.500" fill="#caae9a">
          {Math.abs(n)}
        </text>
      ))}
      {tabs.map((x) => (
        <path key={x} d={`M${Math.round(x) - 3} 19.500h7M${Math.round(x) + 0.5} 16v3`} stroke="#8f8f8d" fill="none" />
      ))}
      <path d="M95 4h9l-4 8zM95 19.500h9l-4-7z" fill="#fff" stroke="#9a9a98" />
      <path d="M930 19.500v-4l4-5 4 5v4z" fill="#fff" stroke="#9a9a98" />
    </svg>
  );
};

const Spelled = ({ num, text, skip = [] }) => (
  <>
    <Num $tight={num.length === 5}>{num}</Num>{" "}
    {text.split(" ").map((w, i, all) => (
      <React.Fragment key={i}>
        {skip.includes(i) ? w : <Wavy>{w}</Wavy>}
        {i < all.length - 1 ? " " : null}
      </React.Fragment>
    ))}
  </>
);

const outline = [
  [0, "1.", "Obsługa klienta"],
  [21, "1.1", "Korzystanie z systemu"],
  [47, "1.1.2", "Przeglądanie blogu"],
  [47, "1.1.3", "Korzystanie z przewodnika m i ż fryzur"],
  [47, "1.1.5", "Rezerwacja"],
  [67, "1.1.5.2", "Tryb gościa"],
  [67, "1.1.5.3", "Potwierdzenie rezerwacji"],
  [47, "1.1.6", "Rejestracja"],
  [73, "1.1.6.1", "Podanie danych osobowych"],
  [21, "1.2", "Dane kontaktowe"],
  [47, "1.2.1", "Oglądanie danych kontaktowych", [0]],
  [21, "1.3", "Dane odnośnie pracowników"],
  [47, "1.3.1", "Oglądanie danych"],
];

const menus = [
  ["Файл", 51],
  ["Правка", 63],
  ["Вид", 39],
  ["Вставка", 67],
  ["Формат", 69],
  ["Стили", 55],
  ["Таблица", 71],
  ["Форма", 62],
  ["Сервис", 62],
  ["Окно", 49],
  ["Справка", 70],
];

export default function App() {
  return (
    <Screen>
      <Global />
      <Defs />
      <Chrome>
        <TopBar>
          <TopLeft>
            Обзор
            <AppName>
              <WriterSmall />
              LibreOffice Writer
              <Caret $gap={3} />
            </AppName>
          </TopLeft>
          <div>Вск, 23:27</div>
          <Tray>
            <TraySlot $w={46}>
              <TelegramTray />
            </TraySlot>
            <TraySlot $w={46}>
              <DropTray />
            </TraySlot>
            <TraySlot $w={77} $pad={12}>
              pl₁ <Caret />
            </TraySlot>
            <TraySlot $w={18}>
              <WifiTray />
            </TraySlot>
            <TraySlot $w={36}>
              <VolumeTray />
            </TraySlot>
            <TraySlot $w={22}>
              <BatteryTray />
            </TraySlot>
            <TraySlot $w={24}>
              <Caret />
            </TraySlot>
          </Tray>
        </TopBar>
        <TitleBar>
          Без имени 1 - LibreOffice Writer
          <WinButtons>
            <WinButton>
              <svg width="10" height="10" viewBox="0 0 10 10">
                <path d="M1 5h8" stroke="currentColor" strokeWidth="1.500" />
              </svg>
            </WinButton>
            <WinButton>
              <svg width="10" height="10" viewBox="0 0 10 10">
                <rect x="1" y="2" width="8" height="6" fill="none" stroke="currentColor" strokeWidth="1.200" />
              </svg>
            </WinButton>
            <WinButton $close>
              <svg width="10" height="10" viewBox="0 0 10 10">
                <path d="M2 2l6 6M8 2l-6 6" stroke="currentColor" strokeWidth="1.500" />
              </svg>
            </WinButton>
          </WinButtons>
        </TitleBar>
        <MenuBar>
          {menus.map(([m, w]) => (
            <MenuItem key={m} $w={w}>
              {m}
            </MenuItem>
          ))}
          <CloseTab>
            <svg width="9" height="9" viewBox="0 0 9 9">
              <path d="M1 1l7 7M8 1L1 8" stroke="#444" strokeWidth="1.100" />
            </svg>
          </CloseTab>
        </MenuBar>
      </Chrome>

      <Toolbar>
        <Grip $w={11} />
        <Tool><NewDoc /></Tool>
        <Drop />
        <Tool><OpenFolder /></Tool>
        <Drop />
        <Tool><SaveDoc /></Tool>
        <Drop />
        <Sep $w={10} $at={7} />
        <Tool><PdfIcon /></Tool>
        <Tool><PrintIcon /></Tool>
        <Tool><PrintIcon lens /></Tool>
        <Sep $w={9} $at={5} />
        <Tool><CutIcon /></Tool>
        <Tool><CopyIcon /></Tool>
        <Tool><PasteIcon /></Tool>
        <Drop />
        <Sep $w={10.5} $at={6} />
        <Tool><BrushIcon /></Tool>
        <Sep $w={6} $at={3} />
        <Tool><UndoIcon /></Tool>
        <Drop />
        <Gap $w={1.5} />
        <Tool><UndoIcon off flip /></Tool>
        <Drop $off />
        <Sep $w={10.5} $at={7} />
        <Tool><FindIcon /></Tool>
        <Tool><SpellIcon /></Tool>
        <Tool><Pilcrow /></Tool>
        <Sep $w={6} $at={5} />
        <Tool><TableIcon /></Tool>
        <Gap $w={2.5} />
        <Drop />
        <Gap $w={1} />
        <Tool><PictureIcon /></Tool>
        <Tool><ChartIcon /></Tool>
        <Tool><TextBox /></Tool>
        <Sep $w={7} $at={5} />
        <Tool><BreakIcon /></Tool>
        <Tool><FieldIcon /></Tool>
        <Drop />
        <Gap $w={2} />
        <Tool><OmegaIcon /></Tool>
        <Sep $w={7} $at={4} />
        <Tool><LinkIcon /></Tool>
        <Tool><NoteDoc /></Tool>
        <Tool><EndnoteIcon /></Tool>
        <Gap $w={1} />
        <Tool><BookmarkIcon /></Tool>
        <Tool><CrossRef /></Tool>
        <Sep $w={8} $at={5.5} />
        <Tool><StickyIcon /></Tool>
        <Tool><TrackIcon /></Tool>
        <Sep $w={8.5} $at={5.5} />
        <Tool><LineIcon /></Tool>
        <Tool><DiamondIcon /></Tool>
        <Drop />
        <Gap $w={1} />
        <Tool><ShapesIcon /></Tool>
      </Toolbar>

      <Toolbar>
        <Grip $w={13} />
        <Combo $w={142}>
          <ComboText>Базовый</ComboText>
          <ComboArrow />
        </Combo>
        <Tool><StyleGear /></Tool>
        <Tool><StyleGear badge="new" /></Tool>
        <Sep $w={10} $at={5} />
        <Combo $w={142}>
          <ComboText>Liberation Serif</ComboText>
          <ComboArrow />
        </Combo>
        <Gap $w={10} />
        <Combo $w={71}>
          <ComboText>12</ComboText>
          <ComboArrow />
        </Combo>
        <Sep $w={8.5} $at={5} />
        <Tool><BoldA /></Tool>
        <Tool><ItalicA /></Tool>
        <Tool><UnderA /></Tool>
        <Tool><StrikeA /></Tool>
        <Sep $w={7.5} $at={4.5} />
        <Tool><SuperA /></Tool>
        <Tool><SubA /></Tool>
        <Sep $w={9} $at={5} />
        <Tool><ClearA /></Tool>
        <Sep $w={6} $at={4} />
        <Tool><FontColor /></Tool>
        <Gap $w={2} />
        <Drop />
        <Tool><HighlightIcon /></Tool>
        <Gap $w={1.5} />
        <Drop />
        <Sep $w={8.5} $at={6.5} />
        <Tool><ListRows /></Tool>
        <Gap $w={1.5} />
        <Drop />
        <Tool><ListRows nums /></Tool>
        <Gap $w={1} />
        <Drop />
        <Sep $w={10} $at={6} />
        <Tool $active $w={31}><Bars rows={[[0, 15], [0, 22], [0, 17], [0, 12]]} /></Tool>
        <Gap $w={1.5} />
        <Tool><Bars rows={[[4, 14], [0, 22], [2, 18], [6, 10]]} /></Tool>
        <Tool><Bars rows={[[6, 16], [0, 22], [4, 18], [10, 12]]} /></Tool>
        <Tool><Bars rows={[[0, 22], [0, 22], [0, 22], [0, 22]]} /></Tool>
        <Sep $w={6} $at={4.5} />
        <Tool><SpacingIcon /></Tool>
        <Gap $w={2.5} />
        <Drop />
        <Gap $w={1} />
        <Tool><ParaSpace /></Tool>
        <Tool><ParaSpace off /></Tool>
        <Sep $w={8} $at={5} />
        <Tool><IndentIcon /></Tool>
        <Tool><IndentIcon out /></Tool>
      </Toolbar>

      <Work>
        <EditorCol>
          <RulerRow>
            <RulerCorner>
              <CornerMark />
            </RulerCorner>
            <RulerSvg />
          </RulerRow>
          <DocRow>
            <Gutter />
            <Page>
              <Heading>
                <Wavy>Diagram</Wavy> <Wavy>Hierarchii</Wavy> <Wavy>Funkcji</Wavy>
              </Heading>
              {outline.map(([indent, num, text, skip]) => (
                <Line key={num} $indent={indent}>
                  <Spelled num={num} text={text} skip={skip} />
                </Line>
              ))}
            </Page>
            <VScroll>
              <VThumb />
            </VScroll>
          </DocRow>
          <HScroll>
            <HThumb />
          </HScroll>
        </EditorCol>
        <Handle>
          <HandleGrip />
        </Handle>
        <TabBar>
          <MenuGlyph />
          <TabDivider />
          <Tab><WrenchIcon /></Tab>
          <Tab><BlankPage /></Tab>
          <Tab><StylesTab /></Tab>
          <Tab><GalleryTab /></Tab>
          <Tab $active><CompassIcon /></Tab>
        </TabBar>
      </Work>

      <Status>
        <Cell $w={200} $pad={10}>Страница 1 из 1</Cell>
        <Cell $w={315}>49 слов, 467 символов</Cell>
        <Cell $w={159} $pad={10}>Базовый</Cell>
        <Cell $w={156} $center>Русский</Cell>
        <Cell $w={67} />
        <Cell $w={28} $center>
          <svg width="14" height="10" viewBox="0 0 14 10">
            <rect x="0" y="1" width="10" height="8" fill="#7a7a78" />
            <path d="M11 0h3M12.500 0v10M11 10h3" stroke="#777" />
          </svg>
        </Cell>
        <Cell $w={29} $center>
          <svg width="12" height="12" viewBox="0 0 12 12">
            <path d="M8 1H1v10h8V9" fill="none" stroke="#888" />
            <path d="M9 2v6M6.500 3.500l5 3M11.500 3.500l-5 3" stroke="#c0141a" strokeWidth="1.100" />
          </svg>
        </Cell>
        <Cell $w={29} />
        <Cell $w={119} />
        <Cell $w={76} $center>
          <svg width="54" height="12" viewBox="0 0 54 12">
            <path d="M1 1h5l2 2v8H1zM14 1h5l2 2v8h-7zM24 1h5l2 2v8h-7zM37 2h8v9h-8zM45 2h8v9h-8z" fill="#fafafa" stroke="#8a8a88" />
            <path d="M37 2l3-1h5M53 2l-3-1h-5" fill="none" stroke="#555" />
          </svg>
        </Cell>
        <Cell $w={144} $center>
          <svg width="128" height="14" viewBox="0 0 128 14">
            <path d="M4 7h8M120 3v8M116 7h8" stroke="#888" strokeWidth="2" />
            <path d="M18 7h97" stroke="#b3b3b1" strokeWidth="2" />
            <path d="M31 3v8" stroke="#9a9a98" />
            <circle cx="69" cy="7" r="3.500" fill="#fff" stroke="#888" />
          </svg>
        </Cell>
        <Cell $w={44} $last $pad={5}>130 %</Cell>
      </Status>

      <Dock>
        <DockSlot $running><Firefox /></DockSlot>
        <DockSlot><Cabinet /></DockSlot>
        <DockSlot $active $running><WriterDock /></DockSlot>
        <DockSlot><StoreDock /></DockSlot>
        <DockSlot><HelpDock /></DockSlot>
        <DockSlot><VSCodeDock /></DockSlot>
        <DockSlot><TerminalDock /></DockSlot>
        <DockSlot><EvinceDock /></DockSlot>
        <DockSlot $running><TelegramDock /></DockSlot>
        <AppGrid>
          {Array.from({ length: 9 }, (_, i) => (
            <AppDot key={i} />
          ))}
        </AppGrid>
      </Dock>
    </Screen>
  );
}
